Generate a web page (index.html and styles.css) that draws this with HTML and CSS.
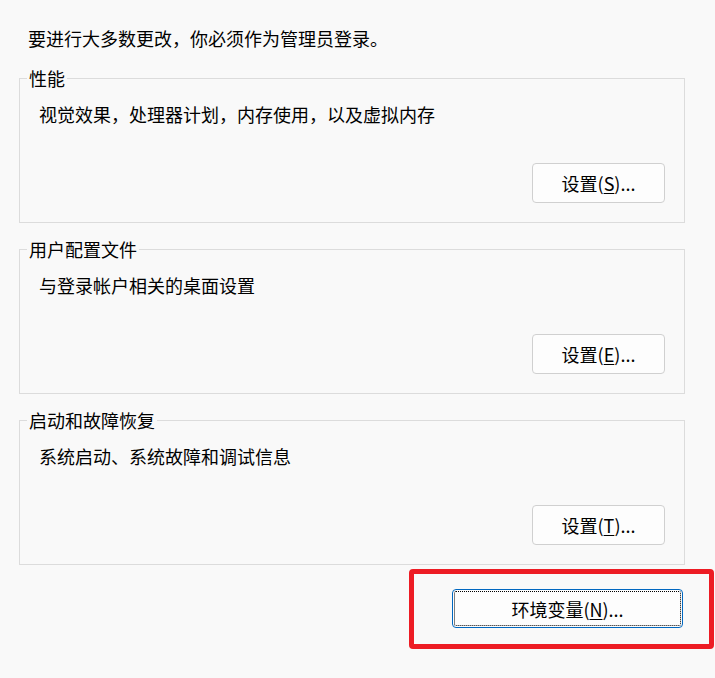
FILE: index.html
```html
<!DOCTYPE html>
<html>
<head>
    <meta charset="utf-8">
    <title>系统属性 - 高级</title>
    <link rel="stylesheet" href="styles.css">
</head>
<body>
    <div id="advanced-tab">
        <div class="admin-note">要进行大多数更改，你必须作为管理员登录。</div>

        <fieldset class="group">
            <legend>性能</legend>
            <div class="group-desc">视觉效果，处理器计划，内存使用，以及虚拟内存</div>
            <button class="dlg-btn">设置(<u>S</u>)...</button>
        </fieldset>

        <fieldset class="group">
            <legend>用户配置文件</legend>
            <div class="group-desc">与登录帐户相关的桌面设置</div>
            <button class="dlg-btn">设置(<u>E</u>)...</button>
        </fieldset>

        <fieldset class="group">
            <legend>启动和故障恢复</legend>
            <div class="group-desc">系统启动、系统故障和调试信息</div>
            <button class="dlg-btn">设置(<u>T</u>)...</button>
        </fieldset>

        <div class="highlight-box">
            <button class="dlg-btn env-btn">环境变量(<u>N</u>)...</button>
        </div>
    </div>
</body>
</html>
```

FILE: styles.css
```css
html, body {
    margin: 0;
    background-color: #f9f9f9;
}
body {
    font-family: "Noto Sans CJK SC", "Noto Sans", sans-serif;
    font-size: 18px;
    line-height: 24px;
    color: #000;
}
#advanced-tab {
    display: flex;
    flex-direction: column;
    padding: 26px 0 0 19px;
}
.admin-note { margin-left: 9px; margin-bottom: 16px; }

.group {
    display: flex;
    flex-direction: column;
    box-sizing: border-box;
    width: 666px;
    min-width: 0;
    margin: 0 0 14px 0;
    padding: 12px 19px 19px 7px;
    border: 1px solid #dcdcdc;
}
.group legend { padding: 0 2px; }
.group-desc { margin-left: 12px; }

.dlg-btn {
    font-family: inherit;
    font-size: 18px;
    line-height: 24px;
    color: #000;
    box-sizing: border-box;
    width: 133px;
    height: 40px;
    padding: 0;
    background-color: #fdfdfd;
    border: 1px solid #d0d0d0;
    border-radius: 4px;
}
.dlg-btn u { text-underline-offset: 2px; }
.group .dlg-btn {
    align-self: flex-end;
    margin-top: 37px;
}

/* red annotation round the environment button */
.highlight-box {
    box-sizing: border-box;
    width: 305px;
    height: 80px;
    margin: -10px 0 0 390px;
    padding: 15px 0 0 38px;
    border: 5px solid #ed1c24;
    border-radius: 4px;
}
.env-btn {
    width: 231px;
    height: 39px;
    border-color: #0067c0;
    outline: 1px dotted #000;
    outline-offset: -3px;
}
```
